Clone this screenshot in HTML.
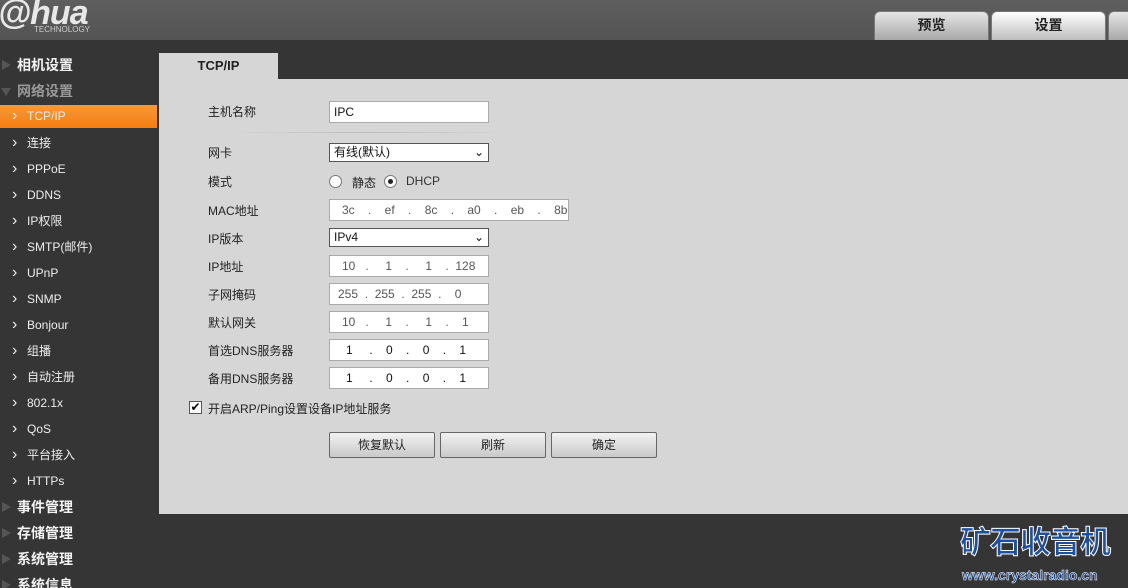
<!DOCTYPE html>
<html><head><meta charset="utf-8"><style>
*{margin:0;padding:0;box-sizing:border-box}
html,body{width:1128px;height:588px;overflow:hidden}
body{background:#353535;font-family:"Liberation Sans","Noto Sans CJK SC",sans-serif;position:relative}
.hdr{position:absolute;left:0;top:0;width:1128px;height:40px;background:linear-gradient(#5e5e5e,#545454);overflow:hidden}
.logo{position:absolute;left:-2px;top:-6px;color:#e8e8e8;font:italic bold 34px "Liberation Sans",sans-serif;letter-spacing:-1px}
.tech{position:absolute;left:34px;top:25px;color:#ccc;font-size:8px}
.tab{position:absolute;top:11px;height:29px;border-radius:6px 6px 0 0;background:linear-gradient(#e6e6e6,#a8a8a8);font-size:14px;color:#222;text-align:center;line-height:27px;font-weight:bold;border:1px solid #777;border-bottom:none}
.side div{position:absolute;left:0;width:157px;height:23px;color:#eee;font-size:12px;line-height:23px;padding-left:13px}
.side .g{font-size:14px;font-weight:bold;padding-left:17px;color:#f2f2f2}
.side .g:before{content:"";position:absolute;left:2px;top:6px;border-left:9px solid #555;border-top:5px solid transparent;border-bottom:5px solid transparent}
.side .d:before{left:1px;top:8px;border-top:8px solid #555;border-left:5px solid transparent;border-right:5px solid transparent;border-bottom:none}
.side .s:before{content:"›";position:absolute;left:0;width:26px;text-align:left;padding-left:12px;font-size:16px;top:-1px}
.side .s{padding-left:27px}
.panel{position:absolute;left:159px;top:79px;width:969px;height:435px;background:#d6d6d6}
.ptab{position:absolute;left:159px;top:53px;width:119px;height:26px;background:#d6d6d6;font-weight:bold;font-size:13px;color:#222;text-align:center;line-height:26px}
.lbl{position:absolute;left:208px;font-size:12px;color:#222}
.in{position:absolute;left:329px;width:160px;height:22px;background:#fff;border:1px solid #aaa;font-size:12px;line-height:20px;padding-left:4px;color:#111}
.ip{color:#555}
.btn{position:absolute;top:432px;width:106px;height:26px;border:1px solid #666;border-radius:2px;background:linear-gradient(#f2f2f2,#c9c9c9);font-size:12px;text-align:center;line-height:24px;color:#222}
</style></head><body>
<div class="hdr"><div class="logo">@hua</div><div class="tech">TECHNOLOGY</div>
<div class="tab" style="left:874px;width:115px">预览</div>
<div class="tab" style="left:991px;width:115px;background:linear-gradient(#fff,#bdbdbd)">设置</div>
<div class="tab" style="left:1108px;width:40px"></div></div>
<div class="side">
<div class="g" style="top:54px">相机设置</div>
<div class="g d" style="top:80px;color:#999">网络设置</div>
<div class="s" style="top:105px;background:linear-gradient(#f59a3a,#f57d10)">TCP/IP</div>
<div class="s" style="top:132px">连接</div>
<div class="s" style="top:158px">PPPoE</div>
<div class="s" style="top:184px">DDNS</div>
<div class="s" style="top:210px">IP权限</div>
<div class="s" style="top:236px">SMTP(邮件)</div>
<div class="s" style="top:262px">UPnP</div>
<div class="s" style="top:288px">SNMP</div>
<div class="s" style="top:314px">Bonjour</div>
<div class="s" style="top:340px">组播</div>
<div class="s" style="top:366px">自动注册</div>
<div class="s" style="top:392px">802.1x</div>
<div class="s" style="top:418px">QoS</div>
<div class="s" style="top:444px">平台接入</div>
<div class="s" style="top:470px">HTTPs</div>
<div class="g" style="top:496px">事件管理</div>
<div class="g" style="top:522px">存储管理</div>
<div class="g" style="top:548px">系统管理</div>
<div class="g" style="top:574px">系统信息</div>
</div>
<div class="ptab">TCP/IP</div>
<div class="panel"></div>
<div style="position:absolute;left:230px;top:132px;width:280px;height:1px;background:linear-gradient(90deg,#d6d6d6,#bbb,#d6d6d6)"></div>
<div class="lbl" style="top:103px">主机名称</div><div class="in" style="top:101px">IPC</div>
<div class="lbl" style="top:144px">网卡</div><div class="in" style="top:143px;height:19px;line-height:17px;border-color:#555">有线(默认)<span style="position:absolute;right:4px;top:0">⌄</span></div>
<div class="lbl" style="top:173px">模式</div>
<div style="position:absolute;left:329px;top:175px;width:13px;height:13px;border:1px solid #777;border-radius:50%;background:#fff"></div>
<div class="lbl" style="left:352px;top:174px">静态</div>
<div style="position:absolute;left:384px;top:175px;width:13px;height:13px;border:1px solid #777;border-radius:50%;background:#fff"><div style="margin:3px;width:5px;height:5px;border-radius:50%;background:#222"></div></div>
<div class="lbl" style="left:406px;top:174px;color:#333">DHCP</div>
<div class="lbl" style="top:202px">MAC地址</div><div class="in ip" style="top:199px;width:240px;padding-left:12px;white-space:pre">3c    .    ef    .    8c    .    a0    .    eb    .    8b</div>
<div class="lbl" style="top:230px">IP版本</div><div class="in" style="top:228px;height:19px;line-height:17px;border-color:#555">IPv4<span style="position:absolute;right:4px;top:0">⌄</span></div>
<div class="lbl" style="top:258px">IP地址</div><div class="in ip" style="top:255px;padding-left:12px;white-space:pre">10   .     1    .     1    .  128</div>
<div class="lbl" style="top:286px">子网掩码</div><div class="in ip" style="top:283px;padding-left:8px;white-space:pre">255  .  255  .  255  .    0</div>
<div class="lbl" style="top:314px">默认网关</div><div class="in ip" style="top:311px;padding-left:12px;white-space:pre">10   .     1    .     1    .    1</div>
<div class="lbl" style="top:342px">首选DNS服务器</div><div class="in" style="top:339px;padding-left:16px;white-space:pre">1     .    0    .    0    .    1</div>
<div class="lbl" style="top:370px">备用DNS服务器</div><div class="in" style="top:367px;padding-left:16px;white-space:pre">1     .    0    .    0    .    1</div>
<div style="position:absolute;left:189px;top:401px;width:13px;height:13px;border:1px solid #555;background:#fff;font-size:12px;line-height:11px;text-align:center">✔</div>
<div class="lbl" style="top:400px">开启ARP/Ping设置设备IP地址服务</div>
<div class="btn" style="left:329px">恢复默认</div>
<div class="btn" style="left:440px">刷新</div>
<div class="btn" style="left:551px">确定</div>
<div style="position:absolute;left:960px;top:526px;font-size:31px;font-weight:bold;color:#1d4fa0;-webkit-text-stroke:1px #fff;letter-spacing:-1px;line-height:34px">矿石收音机</div>
<div style="position:absolute;left:962px;top:566px;font-size:14px;font-weight:bold;color:#1d4fa0;-webkit-text-stroke:0.5px #fff;line-height:18px">www.crystalradio.cn</div>
</body></html>
